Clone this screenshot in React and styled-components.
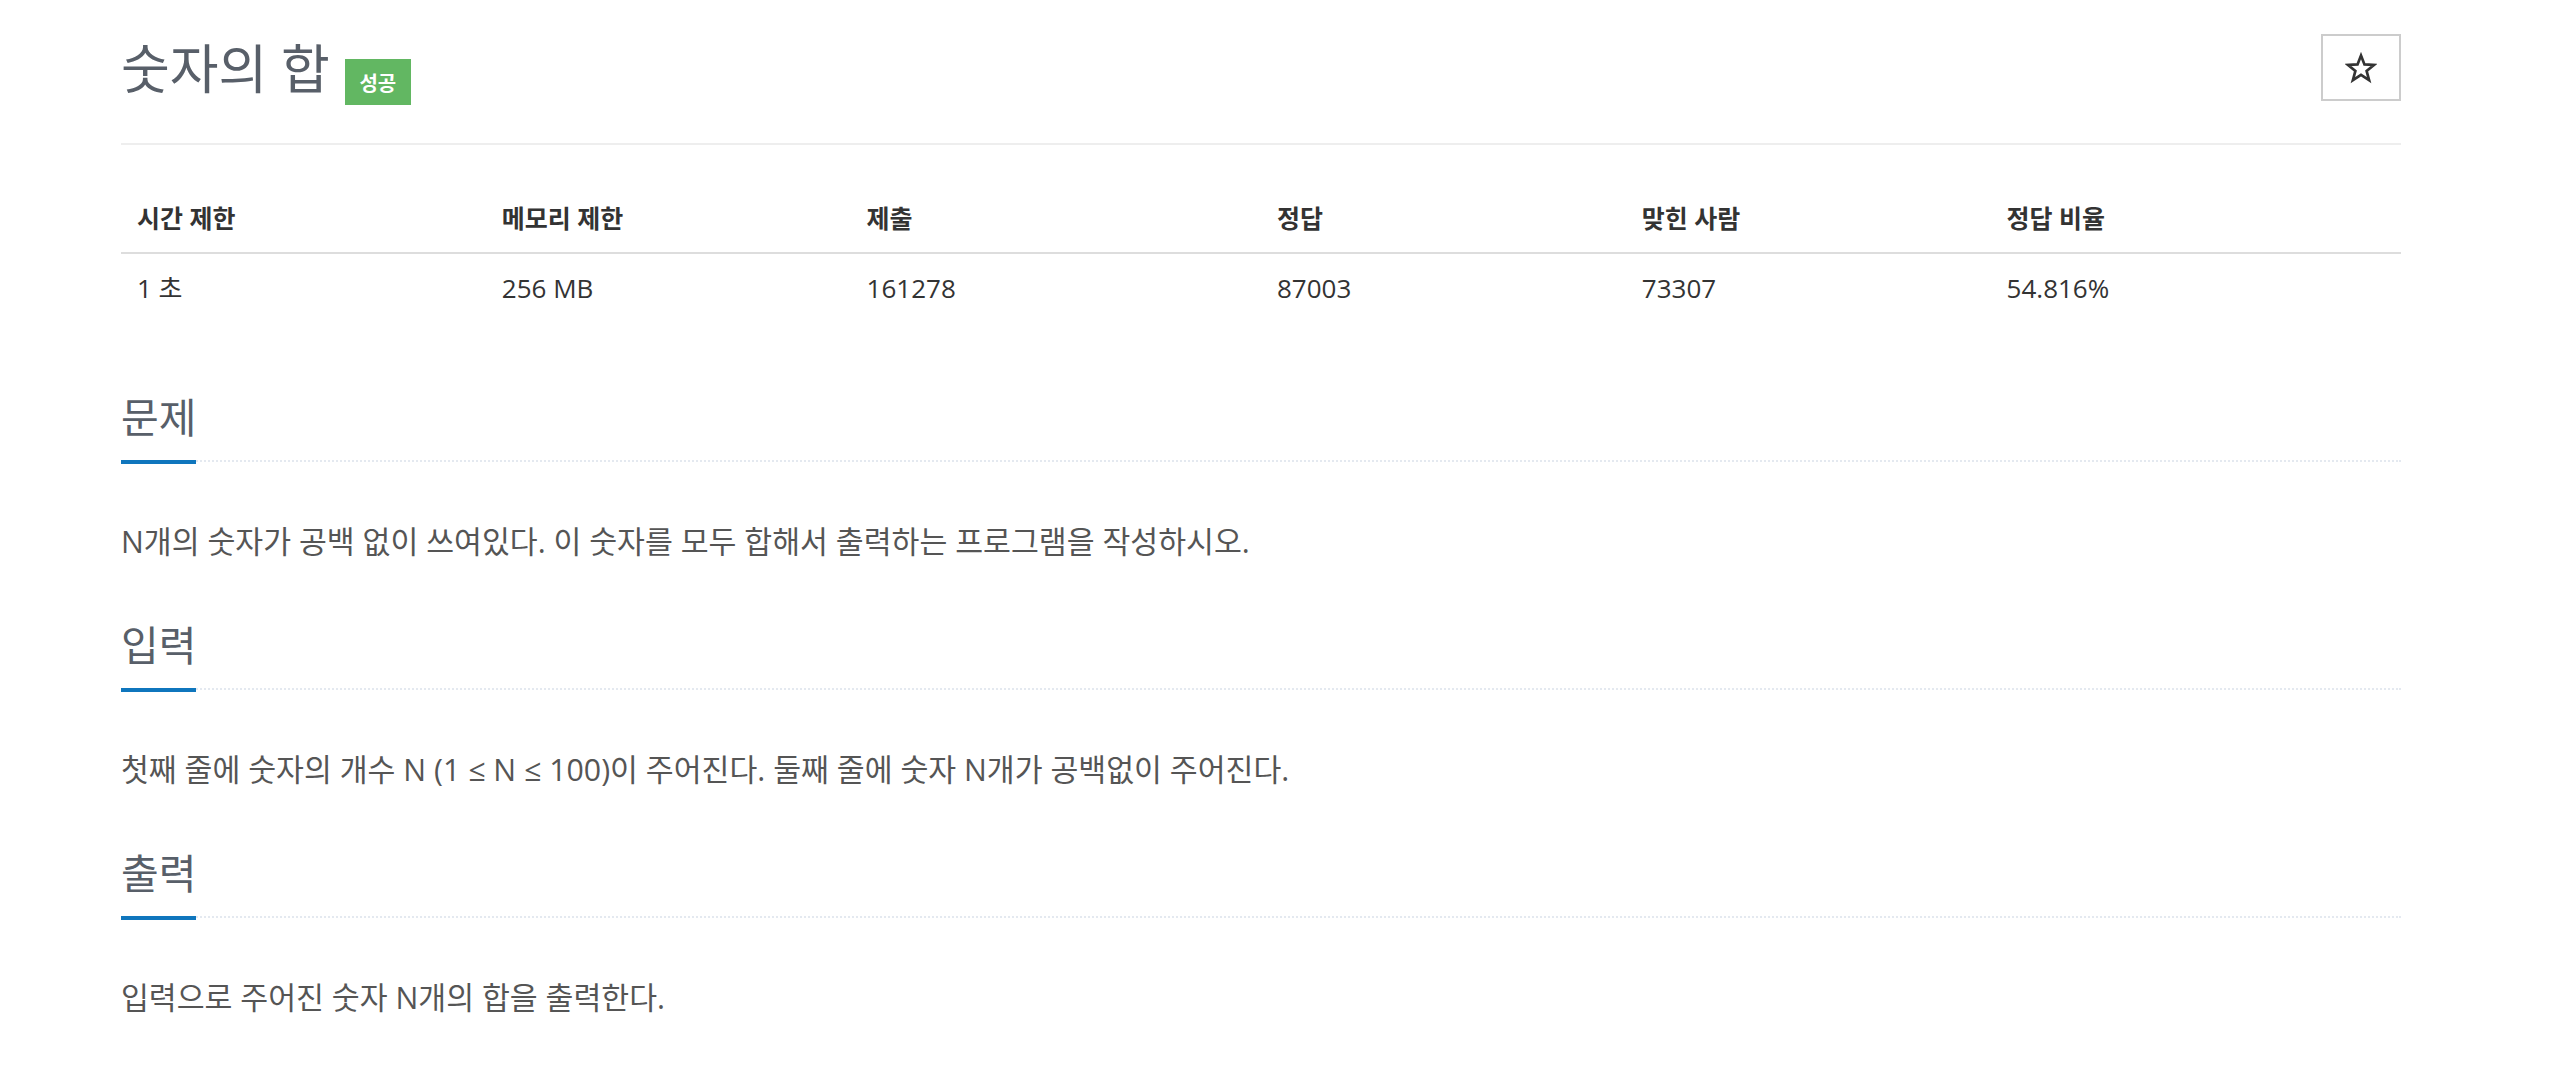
import React from "react";
import styled, { createGlobalStyle } from "styled-components";

const GlobalStyle = createGlobalStyle`
  html, body {
    margin: 0;
    padding: 0;
    background: #ffffff;
  }
  body {
    font-family: "Open Sans", "Noto Sans CJK KR", sans-serif;
    color: #555555;
  }
`;

const Page = styled.div`
  width: 2280px;
  padding-left: 121px;
`;

const Header = styled.header`
  display: flex;
  justify-content: space-between;
  align-items: flex-start;
  padding-top: 34px;
  padding-bottom: 38px;
  border-bottom: 2px solid #eeeeee;
`;

const TitleGroup = styled.div`
  display: flex;
  align-items: flex-start;
  gap: 15px;
`;

const Title = styled.h1`
  margin: 0;
  font-size: 53px;
  line-height: 70px;
  font-weight: 400;
  color: #585f69;
`;

const Badge = styled.span`
  display: flex;
  align-items: center;
  justify-content: center;
  width: 66px;
  height: 46px;
  margin-top: 25px;
  background: #62b762;
  color: #ffffff;
  font-size: 20px;
  font-weight: 700;
`;

const StarButton = styled.button`
  display: flex;
  align-items: center;
  justify-content: center;
  width: 80px;
  height: 67px;
  padding: 0;
  background: #ffffff;
  border: 2px solid #cccccc;
  cursor: pointer;
`;

const InfoTable = styled.table`
  width: 100%;
  margin-top: 39px;
  border-collapse: collapse;
  color: #333333;
`;

const Th = styled.th`
  width: ${(p) => p.$w};
  padding: 12px 16px;
  font-size: 25px;
  line-height: 44px;
  text-align: left;
  font-weight: 700;
  border-bottom: 2px solid #dddddd;
`;

const Td = styled.td`
  padding: 12px 16px;
  font-size: 26px;
  line-height: 44px;
  font-weight: 400;
`;

const Section = styled.section`
  margin-top: 70px;
  & + & {
    margin-top: 0;
  }
`;

const Headline = styled.div`
  border-bottom: 2px dotted #e4e9f0;
`;

const SectionTitle = styled.h2`
  display: inline-block;
  margin: 0 0 -4px;
  padding-bottom: 18px;
  font-size: 41px;
  line-height: 50px;
  font-weight: 400;
  color: #585f69;
  border-bottom: 4px solid #0f76bd;
`;

const Paragraph = styled.p`
  margin: 60px 0 58px;
  font-size: 30.3px;
  line-height: 40px;
  color: #555555;
`;

function StarIcon() {
  return (
    <svg width="32" height="32" viewBox="0 0 24 24" aria-hidden="true">
      <path
        d="M12 2.6l2.6 6.7 7.1.4-5.5 4.5 1.9 6.9L12 17.2l-6.1 3.9 1.9-6.9-5.5-4.5 7.1-.4z"
        fill="none"
        stroke="#333333"
        strokeWidth="2"
        strokeLinejoin="miter"
      />
    </svg>
  );
}

const columns = [
  { head: "시간 제한", value: "1 초", w: "16%" },
  { head: "메모리 제한", value: "256 MB", w: "16%" },
  { head: "제출", value: "161278", w: "18%" },
  { head: "정답", value: "87003", w: "16%" },
  { head: "맞힌 사람", value: "73307", w: "16%" },
  { head: "정답 비율", value: "54.816%", w: "18%" },
];

const sections = [
  {
    title: "문제",
    text: "N개의 숫자가 공백 없이 쓰여있다. 이 숫자를 모두 합해서 출력하는 프로그램을 작성하시오.",
  },
  {
    title: "입력",
    text: "첫째 줄에 숫자의 개수 N (1 ≤ N ≤ 100)이 주어진다. 둘째 줄에 숫자 N개가 공백없이 주어진다.",
  },
  {
    title: "출력",
    text: "입력으로 주어진 숫자 N개의 합을 출력한다.",
  },
];

export default function App() {
  return (
    <>
      <GlobalStyle />
      <Page>
        <Header>
          <TitleGroup>
            <Title>숫자의 합</Title>
            <Badge>성공</Badge>
          </TitleGroup>
          <StarButton aria-label="즐겨찾기">
            <StarIcon />
          </StarButton>
        </Header>
        <InfoTable>
          <thead>
            <tr>
              {columns.map((c) => (
                <Th key={c.head} $w={c.w}>
                  {c.head}
                </Th>
              ))}
            </tr>
          </thead>
          <tbody>
            <tr>
              {columns.map((c) => (
                <Td key={c.head}>{c.value}</Td>
              ))}
            </tr>
          </tbody>
        </InfoTable>
        {sections.map((s) => (
          <Section key={s.title}>
            <Headline>
              <SectionTitle>{s.title}</SectionTitle>
            </Headline>
            <Paragraph>{s.text}</Paragraph>
          </Section>
        ))}
      </Page>
    </>
  );
}
